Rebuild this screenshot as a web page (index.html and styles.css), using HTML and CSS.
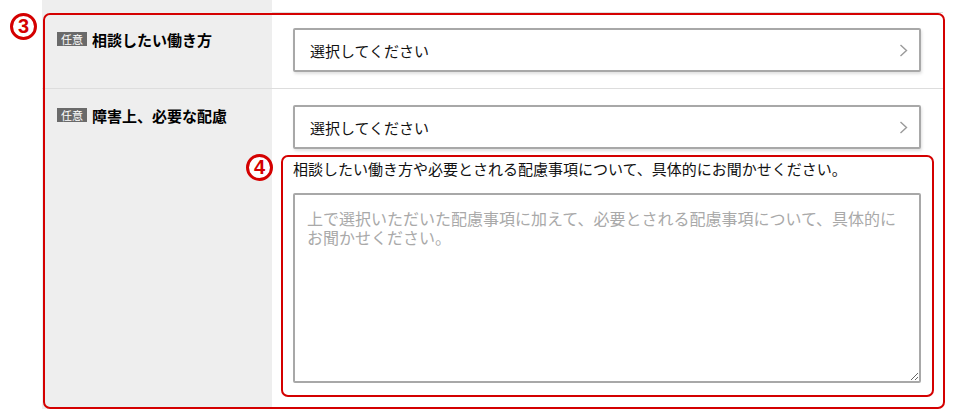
FILE: index.html
```html
<!DOCTYPE html>
<html lang="ja">
<head>
<meta charset="utf-8">
<link rel="stylesheet" href="styles.css">
</head>
<body>
<div class="form">
  <div class="row row-prev">
    <div class="th"></div>
    <div class="td"></div>
  </div>
  <div class="group">
    <span class="mark mark3">3</span>
    <div class="row row-first">
      <div class="th"><span class="badge">任意</span><span class="lbl">相談したい働き方</span></div>
      <div class="td">
        <div class="select"><span>選択してください</span>
          <svg class="chev" width="9" height="13" viewBox="0 0 9 13"><polyline points="1.5,1 7.5,6.5 1.5,12" fill="none" stroke="#9a9a9a" stroke-width="1.4"/></svg>
        </div>
      </div>
    </div>
    <div class="row row-second">
      <div class="th"><span class="badge">任意</span><span class="lbl">障害上、必要な配慮</span></div>
      <div class="td td-second">
        <div class="select"><span>選択してください</span>
          <svg class="chev" width="9" height="13" viewBox="0 0 9 13"><polyline points="1.5,1 7.5,6.5 1.5,12" fill="none" stroke="#9a9a9a" stroke-width="1.4"/></svg>
        </div>
        <div class="detail">
          <span class="mark mark4">4</span>
          <p class="q">相談したい働き方や必要とされる配慮事項について、具体的にお聞かせください。</p>
          <textarea class="ta" placeholder="上で選択いただいた配慮事項に加えて、必要とされる配慮事項について、具体的にお聞かせください。"></textarea>
        </div>
      </div>
    </div>
  </div>
</div>
</body>
</html>
```
FILE: styles.css
```css
html, body {
  margin: 0;
  padding: 0;
  background: #fff;
}
body {
  font-family: "Noto Sans CJK JP", "Noto Sans", sans-serif;
  color: #111;
}
.form {
  width: 901px;
  margin-left: 42px;
}
.row {
  display: flex;
}
.row-prev {
  height: 12px;
  border-bottom: 1px solid #dddddd;
}
.th {
  width: 230px;
  flex: none;
  background: #eeeeee;
  box-sizing: border-box;
  padding: 18px 0 0 15px;
  display: flex;
  align-items: flex-start;
  gap: 5px;
}
.td {
  flex: 1;
  box-sizing: border-box;
  padding: 15px 22px 16px 21px;
}
.row-first {
  border-bottom: 1px solid #dddddd;
}
.td-second {
  padding-top: 16px;
  padding-bottom: 26px;
}
.group {
  position: relative;
}
.group::after {
  content: "";
  position: absolute;
  top: 0;
  left: 1px;
  right: -2px;
  bottom: 0;
  border: 2px solid #d40000;
  border-radius: 7px;
  pointer-events: none;
}
.badge {
  display: inline-block;
  background: #6a6a6a;
  color: #fff;
  font-size: 11px;
  line-height: 14px;
  height: 14px;
  padding: 0 4px;
  margin-top: 1px;
}
.lbl {
  font-size: 15px;
  font-weight: bold;
  line-height: 18px;
  color: #000;
}
.select {
  height: 44px;
  box-sizing: border-box;
  border: 2px solid #a8a8a8;
  border-radius: 2px;
  box-shadow: 1px 2px 3px rgba(0, 0, 0, 0.12);
  background: #fff;
  display: flex;
  align-items: center;
  justify-content: space-between;
  padding: 0 11px 0 15px;
  font-size: 15px;
  color: #111;
}
.chev {
  display: block;
}
.detail {
  position: relative;
  margin-top: 6px;
  padding-top: 2px;
}
.detail::after {
  content: "";
  position: absolute;
  top: 0;
  left: -12px;
  right: -13px;
  bottom: -14px;
  border: 2px solid #d40000;
  border-radius: 7px;
  pointer-events: none;
}
.q {
  margin: 0 0 12px;
  font-size: 15px;
  line-height: 24px;
  color: #111;
  white-space: nowrap;
}
.ta {
  display: block;
  width: 100%;
  height: 190px;
  box-sizing: border-box;
  margin: 0;
  border: 2px solid #a8a8a8;
  border-radius: 2px;
  padding: 14px 12px;
  font-family: "Noto Sans CJK JP", "Noto Sans", sans-serif;
  font-size: 16px;
  line-height: 19px;
  color: #111;
  background: #fff;
}
.ta::placeholder {
  color: #a9a9a9;
  opacity: 1;
}
.mark {
  position: absolute;
  width: 27px;
  height: 27px;
  box-sizing: border-box;
  border: 3px solid #d40000;
  border-radius: 50%;
  color: #d40000;
  font-family: "Liberation Sans", Arial, sans-serif;
  font-weight: bold;
  font-size: 20px;
  line-height: 21px;
  text-align: center;
  background: #fff;
}
.mark3 {
  left: -32px;
  top: 0;
}
.mark4 {
  left: -47px;
  top: -1px;
}
```
